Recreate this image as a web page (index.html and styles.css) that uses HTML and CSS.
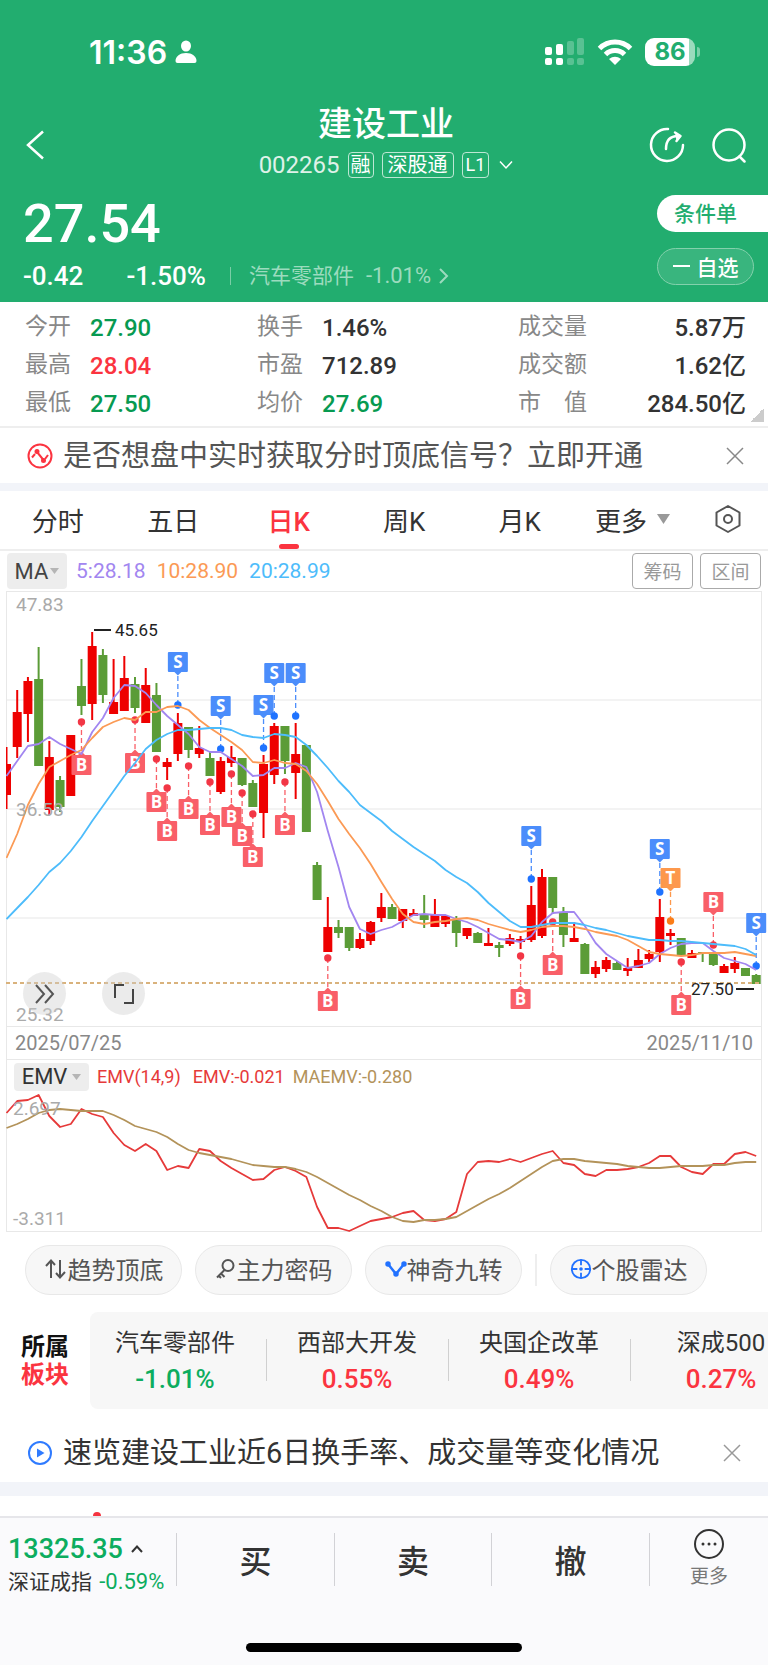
FILE: index.html
```
<!DOCTYPE html>
<html lang="zh-Hans">
<head>
    <meta charset="UTF-8">
    <meta name="viewport" content="width=device-width, initial-scale=1.0">
    <title>建设工业 002265</title>
    <link rel="stylesheet" href="styles.css">
</head>
<body>

    <header class="top">
        <div class="status">
            <div class="status-time">11:36
                <svg width="22" height="24" viewBox="0 0 22 24" fill="#fff"><ellipse cx="11" cy="6" rx="5" ry="5.5"/><path d="M0.500 21C0.500 16.500 5 13 11 13s10.500 3.500 10.500 8q0 2-2 2h-17q-2 0-2-2z"/></svg>
            </div>
            <div class="status-icons">
                <svg width="40" height="28" viewBox="0 0 40 28" fill="#fff">
                    <rect x="0" y="9" width="7" height="8" rx="2"/><rect x="11" y="6" width="7" height="11" rx="2"/>
                    <rect x="22" y="3" width="7" height="14" rx="2" opacity=".25"/><rect x="32" y="0" width="7" height="17" rx="2" opacity=".25"/>
                    <rect x="0" y="20" width="7" height="7" rx="2"/><rect x="11" y="20" width="7" height="7" rx="2"/>
                    <rect x="22" y="20" width="7" height="7" rx="2" opacity=".25"/><rect x="32" y="20" width="7" height="7" rx="2" opacity=".25"/>
                </svg>
                <svg width="36" height="26" viewBox="0 0 36 26" fill="none" stroke="#fff" stroke-width="5">
                    <path d="M2.500 9.500a22 22 0 0 1 31 0"/><path d="M8.500 15.500a13.500 13.500 0 0 1 19 0"/><path d="M12 20q6-4.500 12 0l-6 6z" fill="#fff" stroke="none"/>
                </svg>
                <div class="battery">86</div>
            </div>
        </div>

        <div class="nav">
            <button class="icon-btn" aria-label="返回"><svg width="20" height="30" viewBox="0 0 20 30" fill="none" stroke="#fff" stroke-width="2.500"><path d="M18 1.500L3 15l15 13.500"/></svg></button>
            <div class="nav-title">
                <h1>建设工业</h1>
                <div class="nav-sub">
                    <span class="code">002265</span>
                    <span class="tag">融</span>
                    <span class="tag tag-wide">深股通</span>
                    <span class="tag tag-l1">L1</span>
                    <svg width="14" height="10" viewBox="0 0 14 10" fill="none" stroke="#fff" stroke-width="1.500"><path d="M1 1.500l6 6.500 6-6.500"/></svg>
                </div>
            </div>
            <div class="nav-actions">
                <button class="icon-btn" aria-label="分享"><svg width="36" height="36" viewBox="0 0 36 36" fill="none" stroke="#fff" stroke-width="2.500" stroke-linecap="round" stroke-linejoin="round"><path d="M19 2A16 16 0 1 0 34 18"/><path d="M17 22c0-9 4-13 12-13"/><path d="M26 5.500l5.500 3.500-4 5" fill="#fff"/></svg></button>
                <button class="icon-btn" aria-label="搜索"><svg width="36" height="36" viewBox="0 0 36 36" fill="none" stroke="#fff" stroke-width="2.500" stroke-linecap="round"><circle cx="18" cy="18" r="15.500"/><path d="M28.500 29.500l5 5"/></svg></button>
            </div>
        </div>

        <div class="quote">
            <div>
                <div class="price">27.54</div>
                <div class="change">
                    <span class="change-num">-0.42</span>
                    <span class="change-pct">-1.50%</span>
                    <a class="industry" href="#">汽车零部件 <span class="industry-pct">-1.01%</span>
                        <svg width="10" height="16" viewBox="0 0 10 16" fill="none" stroke="currentColor" stroke-width="2"><path d="M1 1l7 7-7 7"/></svg>
                    </a>
                </div>
            </div>
            <div class="quote-actions">
                <button class="btn-order">条件单</button>
                <button class="btn-fav"><svg width="17" height="2"><rect width="17" height="2" fill="#fff"/></svg>自选</button>
            </div>
        </div>
    </header>

    <section class="stats">
        <dl><dt>今开</dt><dd class="green">27.90</dd><dt>最高</dt><dd class="red">28.04</dd><dt>最低</dt><dd class="green">27.50</dd></dl>
        <dl><dt>换手</dt><dd>1.46%</dd><dt>市盈</dt><dd>712.89</dd><dt>均价</dt><dd class="green">27.69</dd></dl>
        <dl class="stats-right"><dt>成交量</dt><dd>5.87万</dd><dt>成交额</dt><dd>1.62亿</dd><dt>市　值</dt><dd>284.50亿</dd></dl>
    </section>

    <div class="banner">
        <svg width="26" height="26" viewBox="0 0 26 26" fill="none" stroke="#fb3440" stroke-width="2"><circle cx="13" cy="13" r="11.500"/><path d="M5 14.500l3-3.500"/><path d="M10 9l6.500 8"/><path d="M18 16l3-4"/><circle cx="10" cy="8.500" r="1.500" fill="#fb3440"/><circle cx="16.500" cy="17.500" r="1.500" fill="#fb3440"/></svg>
        <a href="#">是否想盘中实时获取分时顶底信号？立即开通</a>
        <button class="close" aria-label="关闭"><svg width="18" height="18" viewBox="0 0 18 18" stroke="#888" stroke-width="1.500"><path d="M1 1l16 16M17 1L1 17"/></svg></button>
    </div>

    <nav class="tabs">
        <button>分时</button>
        <button>五日</button>
        <button class="active">日K</button>
        <button>周K</button>
        <button>月K</button>
        <button class="tab-more">更多 <svg width="13" height="10"><path d="M0 0h13l-6.500 10z" fill="#999"/></svg></button>
        <button class="tab-set" aria-label="设置"><svg width="28" height="30" viewBox="0 0 28 30" fill="none" stroke="#555" stroke-width="2"><path d="M14 2l11.500 6.500v13L14 28 2.500 21.500v-13z" stroke-linejoin="round"/><circle cx="14" cy="15" r="4"/></svg></button>
    </nav>

    <div class="ma">
        <button class="indicator">MA<svg width="9" height="6"><path d="M0 0h9L4.500 6z" fill="#b5b5b5"/></svg></button>
        <span class="ma5">5:28.18</span>
        <span class="ma10">10:28.90</span>
        <span class="ma20">20:28.99</span>
        <button class="outline first">筹码</button>
        <button class="outline">区间</button>
    </div>

    <div class="panel">
        <svg class="chart" id="kline" viewBox="7 593 754 434"></svg>
        <div class="chart-tools">
            <button aria-label="快进"><svg width="22" height="20" viewBox="0 0 22 20" fill="none" stroke="#555" stroke-width="2"><path d="M2 1l8 9-8 9M11 1l8 9-8 9"/></svg></button>
            <button aria-label="全屏"><svg width="22" height="20" viewBox="0 0 22 20" fill="none" stroke="#444" stroke-width="2"><path d="M2 14V1h9M20 5v14h-9"/></svg></button>
        </div>
    </div>
    <div class="dates"><span>2025/07/25</span><span>2025/11/10</span></div>
    <div class="panel emv-panel">
        <div class="emv-head">
            <button class="indicator">EMV<svg width="9" height="6"><path d="M0 0h9L4.500 6z" fill="#b5b5b5"/></svg></button>
            <span class="emv">EMV(14,9)</span>
            <span class="emv">EMV:-0.021</span>
            <span class="maemv">MAEMV:-0.280</span>
        </div>
        <svg class="chart" id="emv" viewBox="7 1093 754 138"></svg>
    </div>

    <div class="tools">
        <button><svg width="24" height="22" viewBox="0 0 24 22" fill="none" stroke="#555" stroke-width="2"><path d="M7 20V3M2 8l5-5.500L11 7"/><path d="M16 2v17M12 15l4 4.500 5-5.500"/></svg>趋势顶底</button>
        <button><svg width="22" height="22" viewBox="0 0 22 22" fill="none" stroke="#555" stroke-width="2"><circle cx="13" cy="7.500" r="5.500"/><path d="M9.500 12L2 19.500M6 15.500l3.500 3.500M3.500 17.500l2.500 2.500"/></svg>主力密码</button>
        <button><svg width="22" height="18" viewBox="0 0 22 18" fill="#2272ff" stroke="#2272ff" stroke-width="2.500"><path d="M3 4l8 10 8-10" fill="none"/><circle cx="3" cy="4" r="1.500"/><circle cx="11" cy="14" r="1.500"/><circle cx="19" cy="4" r="1.500"/></svg>神奇九转</button>
        <span class="tools-line"></span>
        <button><svg width="22" height="22" viewBox="0 0 24 24" fill="none" stroke="#2272ff" stroke-width="2"><circle cx="12" cy="12" r="10"/><path d="M12 2v6M12 16v6M2 12h6M16 12h6"/><circle cx="12" cy="12" r="1" fill="#2272ff"/></svg>个股雷达</button>
    </div>

    <section class="sector">
        <h2>所属<br><span>板块</span></h2>
        <div class="sector-list">
            <a href="#">汽车零部件<b class="green2">-1.01%</b></a>
            <a href="#">西部大开发<b>0.55%</b></a>
            <a href="#">央国企改革<b>0.49%</b></a>
            <a href="#">深成500<b>0.27%</b></a>
        </div>
    </section>

    <div class="banner banner-video">
        <svg width="26" height="26" viewBox="0 0 26 26" fill="none" stroke="#2f7bff" stroke-width="2"><circle cx="13" cy="13" r="11"/><path d="M10 8.500v9l7.500-4.500z" fill="#2f7bff" stroke="none"/></svg>
        <a href="#">速览建设工业近6日换手率、成交量等变化情况</a>
        <button class="close" aria-label="关闭"><svg width="18" height="18" viewBox="0 0 18 18" stroke="#999" stroke-width="1.500"><path d="M1 1l16 16M17 1L1 17"/></svg></button>
    </div>

    <div class="peek"><svg width="8" height="4"><circle cx="4" cy="4" r="4" fill="#f5333f"/></svg></div>

    <footer class="bottom">
        <div class="trade">
            <div class="index">
                <div class="index-num">13325.35 <svg width="12" height="8" viewBox="0 0 12 8" fill="none" stroke="#333" stroke-width="2"><path d="M1 7l5-5.500L11 7"/></svg></div>
                <div class="index-name">深证成指 <span>-0.59%</span></div>
            </div>
            <button>买</button>
            <button>卖</button>
            <button>撤</button>
            <button class="trade-more">
                <svg width="32" height="32" viewBox="0 0 32 32" fill="none" stroke="#333" stroke-width="2"><circle cx="16" cy="16" r="14"/><g fill="#333" stroke="none"><circle cx="10" cy="16" r="1.500"/><circle cx="16" cy="16" r="1.500"/><circle cx="22" cy="16" r="1.500"/></g></svg>
                更多
            </button>
        </div>
        <div class="home-bar"></div>
    </footer>

    <script>
        const STEP = 10.71;
        const RED = '#ee0000';
        const GREEN = '#5b9c37';

        // [最高, 实体上沿, 实体下沿, 最低, 1 涨 / 0 跌]
        const candles = [
            [748,765,796,810,1],[691,713,748,759,1],[678,682,715,743,1],[648,680,767,767,0],[742,758,811,816,1],
            [777,781,808,813,0],[736,736,797,797,1],[660,687,707,716,0],[633,647,705,721,1],[650,656,696,704,0],
            [660,703,715,715,1],[657,679,712,712,1],[678,685,709,714,0],[669,686,724,724,1],[684,696,753,753,0],
            [759,763,768,781,1],[714,724,755,762,1],[728,728,751,759,0],[727,749,755,759,1],[753,759,777,777,0],
            [758,762,793,795,1],[747,758,764,768,1],[759,759,786,787,0],[781,784,808,808,0],[756,765,814,839,1],
            [724,727,776,785,1],[727,727,762,775,0],[724,755,774,800,1],[746,746,833,833,0],[863,866,901,901,0],
            [898,928,953,953,1],[921,928,934,939,0],[928,928,949,952,0],[934,940,949,950,1],[922,923,942,946,1],
            [894,908,919,923,1],[905,908,920,920,0],[910,910,922,929,1],[910,914,917,917,1],[896,915,921,929,0],
            [900,915,928,928,1],[917,917,925,928,1],[917,921,934,948,0],[929,929,937,940,1],[933,934,944,944,0],
            [929,944,947,947,1],[943,946,949,958,0],[935,939,945,947,1],[937,940,943,950,1],[887,906,941,943,1],
            [870,878,937,939,1],[878,878,909,915,0],[908,914,936,948,0],[923,939,943,943,1],[944,945,975,975,0],
            [962,968,975,979,1],[958,961,970,973,1],[962,964,971,971,0],[959,969,972,977,1],[950,961,969,969,1],
            [951,955,960,963,1],[900,918,953,963,1],[930,934,937,946,1],[939,939,956,956,0],[951,954,959,959,1],
            [953,953,954,963,0],[954,954,966,967,0],[965,967,974,974,1],[958,964,970,974,1],[969,969,977,977,0],
            [975,976,985,985,0]
        ];
        const ma5 = [777,762,747,745,738,745,750,755,733,719,699,686,687,694,706,717,726,735,748,753,753,760,767,777,776,769,769,764,768,793,832,868,908,930,935,931,928,922,916,915,916,916,920,923,928,934,940,941,943,937,923,914,913,913,927,944,955,962,969,967,964,955,949,945,944,944,952,959,962,965,971];
        const ma10 = [859,835,806,785,768,762,756,751,739,728,723,719,721,713,713,708,707,711,721,729,736,743,751,763,764,761,764,765,772,785,802,820,835,849,865,883,900,915,923,925,923,922,920,919,921,925,928,931,933,931,928,927,927,928,930,933,935,937,941,947,953,955,956,957,956,954,954,954,953,955,957];
        const ma20 = [920,909,898,886,873,864,852,838,822,807,792,777,764,750,741,735,731,731,730,729,729,731,736,738,739,735,736,738,746,757,769,782,793,806,814,822,832,840,848,855,862,871,878,884,893,904,913,922,928,928,926,924,924,924,926,929,931,934,937,939,941,941,942,942,943,944,945,946,947,950,956];
        const emv = [1113,1101,1100,1095,1116,1127,1124,1109,1114,1117,1133,1145,1151,1144,1151,1170,1166,1168,1149,1151,1161,1168,1174,1180,1179,1170,1167,1171,1177,1207,1228,1228,1231,1226,1221,1219,1217,1213,1211,1220,1221,1219,1212,1174,1162,1161,1162,1159,1162,1158,1154,1151,1163,1165,1174,1176,1170,1170,1169,1167,1163,1156,1156,1167,1172,1174,1164,1164,1154,1152,1156];
        const maemv = [1128,1124,1119,1113,1110,1109,1110,1111,1111,1111,1115,1120,1126,1129,1132,1137,1144,1150,1153,1155,1157,1159,1162,1165,1166,1167,1167,1169,1172,1177,1183,1189,1195,1200,1206,1211,1217,1221,1222,1220,1220,1219,1217,1211,1205,1199,1194,1188,1181,1174,1167,1161,1159,1159,1161,1162,1163,1164,1166,1167,1168,1168,1167,1166,1166,1166,1165,1165,1163,1162,1162];

        // [序号, 圆点 y, 字母, 方向 -1 上 / 1 下]
        const marks = [
            [16,706,'S',-1],[20,750,'S',-1],[24,749,'S',-1],[25,717,'S',-1],[27,717,'S',-1],[49,880,'S',-1],
            [61,893,'S',-1],[62,922,'T',-1],[66,946,'B',-1],[70,967,'S',-1],
            [7,723,'B',1],[12,721,'B',1],[14,760,'B',1],[15,789,'B',1],[17,767,'B',1],[19,783,'B',1],[21,775,'B',1],
            [22,794,'B',1],[23,815,'B',1],[26,783,'B',1],[30,959,'B',1],[48,957,'B',1],[51,923,'B',1],[63,963,'B',1]
        ];
        const markColors = {
            S: ['#4b8dfb', '#1f73ff'],
            T: ['#fd984c', '#fb7d18'],
            B: ['#f95f68', '#f23645']
        };

        function px(i) {
            return 6.5 + i * STEP;
        }

        function line(data, color, width) {
            const points = data.map((y, i) => `${px(i).toFixed(1)},${y}`).join(' ');
            return `<polyline points="${points}" fill="none" stroke="${color}" stroke-width="${width}" stroke-linejoin="round"/>`;
        }

        function drawCandle(c, i) {
            const color = c[4] ? RED : GREEN;
            const x = px(i);
            return `<path d="M${x} ${c[0]}V${c[3]}" stroke="${color}" stroke-width="2"/>` +
                `<rect x="${x - 4.5}" y="${c[1]}" width="9" height="${c[2] - c[1]}" fill="${color}"/>`;
        }

        function drawMark(m) {
            const [i, y, letter, dir] = m;
            const [fill, dot] = markColors[letter];
            const x = px(i);
            const c = y + dir * 43;
            const edge = c - dir * 9.5;
            return `<path d="M${x} ${y}V${edge}" stroke="${fill}" stroke-width="1.3" stroke-dasharray="5 3"/>` +
                `<circle cx="${x}" cy="${y}" r="3.7" fill="${dot}"/>` +
                `<rect x="${x - 10}" y="${c - 10}" width="20" height="20" rx="1" fill="${fill}"/>` +
                `<path d="M${x - 4} ${edge}h8l-4 ${-dir * 4}z" fill="${fill}"/>` +
                `<text class="mark" x="${x}" y="${c + 6}">${letter}</text>`;
        }

        function drawKline() {
            let html = '<path d="M7 701H761M7 810H761M7 919H761" stroke="#efefef" stroke-width="1.5"/>';
            html += '<clipPath id="frame"><rect x="6" y="593" width="762" height="434"/></clipPath><g clip-path="url(#frame)">';
            html += candles.map(drawCandle).join('');
            html += marks.map(drawMark).join('');
            html += line(ma5, '#a286f0', 1.8) + line(ma10, '#fb9a55', 1.8) + line(ma20, '#4dbcfb', 1.8);
            html += '<path d="M6 984H762" stroke="#d9b27c" stroke-width="2" stroke-dasharray="4 3"/></g>';
            html += '<path d="M94 631H111M736 990H754" stroke="#222" stroke-width="2"/>';
            html += '<text class="peak" x="115" y="637">45.65</text><text class="peak" x="691" y="996">27.50</text>';
            html += '<text class="axis" x="16" y="612">47.83</text><text class="axis" x="16" y="817">36.58</text><text class="axis" x="16" y="1022">25.32</text>';
            document.getElementById('kline').innerHTML = html;
        }

        function drawEmv() {
            document.getElementById('emv').innerHTML =
                line(emv, '#e63a3a', 1.8) + line(maemv, '#b3935a', 1.8) +
                '<text class="axis" x="13" y="1115">2.697</text><text class="axis" x="13" y="1225">-3.311</text>';
        }

        drawKline();
        drawEmv();
    </script>

</body>
</html>
```

FILE: styles.css
```
* {
    box-sizing: border-box;
}
body {
    margin: 0;
    background: #fff;
    color: #333;
    font-family: Roboto, "Noto Sans CJK SC", sans-serif;
    font-size: 24px;
}
button {
    margin: 0;
    padding: 0;
    border: none;
    background: none;
    color: inherit;
    font-family: inherit;
    font-size: inherit;
    cursor: pointer;
}
a {
    color: inherit;
    text-decoration: none;
}
h1, h2, dl, dd {
    margin: 0;
}
svg {
    flex-shrink: 0;
}

/* 顶部 */
.top {
    background: #22ad6f;
    color: #fff;
}
.status {
    display: flex;
    justify-content: space-between;
    align-items: center;
    height: 102px;
    padding: 2px 73px 0 89px;
}
.status-time {
    display: flex;
    align-items: center;
    gap: 8px;
    font-family: Inter, sans-serif;
    font-size: 32px;
    font-weight: 600;
}
.status-icons {
    display: flex;
    align-items: center;
    gap: 12px;
}
.battery {
    position: relative;
    width: 50px;
    height: 28px;
    border-radius: 9px;
    background: linear-gradient(to right, #fff 88%, #9bdbbd 88%);
    color: #22ad6f;
    font-family: Inter, sans-serif;
    font-size: 24px;
    font-weight: 700;
    line-height: 28px;
    text-align: center;
}
.battery::after {
    content: "";
    position: absolute;
    left: 52px;
    top: 9px;
    width: 3px;
    height: 10px;
    border-radius: 0 3px 3px 0;
    background: #7acfa8;
}
.nav {
    display: grid;
    grid-template-columns: 1fr auto 1fr;
    align-items: center;
    min-height: 86px;
    padding: 0 21px 0 25px;
}
.icon-btn {
    display: flex;
}
.nav-title {
    align-self: start;
}
.nav-title h1 {
    font-size: 34px;
    font-weight: 500;
    line-height: 44px;
    text-align: center;
}
.nav-sub {
    display: flex;
    align-items: center;
    gap: 8px;
    margin-top: 5px;
}
.code {
    font-size: 24px;
    opacity: .85;
}
.tag {
    height: 26px;
    padding: 0 2px;
    border: 1px solid rgba(255, 255, 255, .7);
    border-radius: 4px;
    font-size: 20px;
    line-height: 24px;
}
.tag-wide {
    padding: 0 5px;
}
.tag-l1 {
    padding: 0 3px;
    margin-right: 2px;
    font-size: 18px;
}
.nav-actions {
    display: flex;
    justify-content: flex-end;
    gap: 26px;
}
.quote {
    display: flex;
    justify-content: space-between;
    padding: 7px 0 10px 23px;
}
.price {
    font-size: 54px;
    font-weight: 500;
    line-height: 58px;
}
.change {
    display: flex;
    align-items: center;
    height: 32px;
    margin-top: 7px;
    font-size: 26px;
    font-weight: 500;
}
.change-pct {
    margin-left: 43px;
}
.industry {
    display: flex;
    align-items: center;
    gap: 12px;
    margin-left: 24px;
    font-size: 21px;
    font-weight: 400;
    line-height: 22px;
    color: #9cdbbe;
}
.industry-pct {
    font-size: 22px;
}
.industry::before {
    content: "";
    width: 1px;
    height: 18px;
    margin-right: 6px;
    background: #7acea6;
}
.industry svg {
    margin-left: -4px;
}
.quote-actions {
    display: flex;
    flex-direction: column;
    gap: 16px;
    width: 111px;
}
.btn-order {
    height: 37px;
    padding: 0 14px 3px 0;
    border-radius: 19px 0 0 19px;
    background: #fff;
    color: #22ad6f;
    font-size: 21px;
    font-weight: 500;
}
.btn-fav {
    display: flex;
    justify-content: center;
    align-items: center;
    gap: 7px;
    width: 97px;
    height: 37px;
    padding-bottom: 2px;
    border: 1px solid #83d1ac;
    border-radius: 19px;
    background: #39b57e;
    color: #fff;
    font-size: 21px;
    font-weight: 500;
}

/* 行情数据 */
.stats {
    display: grid;
    grid-template-columns: 232fr 261fr 228fr;
    padding: 8px 22px 2px 25px;
    border-bottom: 2px solid #eee;
    background: linear-gradient(135deg, transparent 50%, #ccc 50%) right 4px bottom 4px / 14px 14px no-repeat;
}
.stats dl {
    display: grid;
    grid-template-columns: 65px 1fr;
    grid-auto-rows: 38px;
    line-height: 36px;
}
.stats dt {
    color: #888;
    font-size: 23px;
    white-space: nowrap;
    line-height: 34px;
}
.stats dd {
    font-weight: 500;
}
.stats .stats-right {
    grid-template-columns: auto 1fr;
}
.stats-right dd {
    text-align: right;
}
.green {
    color: #079a51;
}
.red {
    color: #fb3440;
}

/* 提示条 */
.banner {
    display: flex;
    align-items: center;
    gap: 10px;
    min-height: 63px;
    padding: 0 22px 0 27px;
    border-bottom: 8px solid #f2f4f9;
    font-size: 29px;
    line-height: 40px;
    color: #555;
    white-space: nowrap;
}
.close {
    display: flex;
    margin-left: auto;
    padding: 2px;
}
.banner-video {
    min-height: 87px;
    padding-top: 15px;
    padding-right: 25px;
    border-bottom-width: 14px;
    color: #333;
}

/* 周期 */
.tabs {
    display: flex;
    height: 60px;
    border-bottom: 2px solid #eee;
    font-size: 26px;
    color: #333;
}
.tabs button {
    position: relative;
    flex: 115;
    padding-bottom: 2px;
}
.tabs .active {
    color: #fb3440;
    font-weight: 500;
}
.active::after {
    content: "";
    position: absolute;
    left: calc(50% - 10px);
    bottom: 0;
    width: 20px;
    height: 5px;
    border-radius: 3px;
    background: #fb3440;
}
.tabs .tab-more {
    display: flex;
    justify-content: center;
    align-items: center;
    gap: 10px;
    flex: 110;
}
.tabs .tab-set {
    display: flex;
    justify-content: center;
    align-items: center;
    flex: 80;
}
.ma {
    display: flex;
    align-items: center;
    gap: 11px;
    height: 40px;
    padding: 0 7px;
    font-size: 21px;
}
.indicator {
    display: flex;
    justify-content: center;
    align-items: center;
    gap: 2px;
    width: 60px;
    height: 36px;
    border-radius: 4px;
    background: #ededed;
    color: #444;
    font-size: 22px;
}
.ma .indicator {
    margin-right: -2px;
}
.ma5 {
    color: #a286f0;
}
.ma10 {
    color: #fb9a55;
}
.ma20 {
    color: #4dbcfb;
}
.outline {
    width: 61px;
    height: 36px;
    padding-bottom: 2px;
    border: 1px solid #aaa;
    border-radius: 4px;
    color: #999;
    font-size: 19px;
}
.outline.first {
    margin-left: auto;
    margin-right: -4px;
}

/* 图表 */
.panel {
    position: relative;
    margin: 0 6px;
    border: 1px solid #e8e8e8;
}
.chart {
    display: block;
    width: 100%;
    overflow: visible;
}
.mark {
    fill: #fff;
    font: bold 17px "Open Sans", sans-serif;
    text-anchor: middle;
}
.peak {
    fill: #222;
    font-size: 17px;
}
.axis {
    fill: #aaa;
    font-size: 19px;
}
.chart-tools {
    position: absolute;
    left: 16px;
    bottom: 11px;
    display: flex;
    gap: 36px;
}
.chart-tools button {
    display: flex;
    justify-content: center;
    align-items: center;
    width: 43px;
    height: 43px;
    border-radius: 50%;
    background: rgba(205, 205, 205, .4);
}
.dates {
    display: flex;
    justify-content: space-between;
    margin: 0 6px;
    padding: 0 8px;
    border: solid #e8e8e8;
    border-width: 0 1px;
    font-size: 20px;
    line-height: 32px;
    color: #888;
}
.emv-head {
    display: flex;
    align-items: center;
    gap: 8px;
    height: 33px;
    padding-left: 7px;
    font-size: 18px;
}
.emv-head .indicator {
    gap: 5px;
    width: 75px;
    height: 28px;
    color: #333;
}
.emv {
    margin-right: 4px;
    color: #e63a3a;
}
.maemv {
    margin-left: -4px;
    color: #b3935a;
}

/* 工具 */
.tools {
    display: flex;
    align-items: center;
    gap: 13px;
    padding: 13px 0 17px 25px;
}
.tools button {
    display: flex;
    justify-content: center;
    align-items: center;
    width: 157px;
    height: 50px;
    padding-bottom: 3px;
    border: 1px solid #e8e8e8;
    border-radius: 25px;
    background: #f7f7f7;
    color: #555;
    white-space: nowrap;
}
.tools-line {
    width: 2px;
    height: 32px;
    background: #eee;
}
.sector {
    display: flex;
    align-items: center;
    gap: 21px;
    padding-left: 21px;
    overflow: hidden;
}
.sector h2 {
    flex-shrink: 0;
    color: #111;
    font-size: 24px;
    font-weight: 700;
    line-height: 28px;
}
.sector h2 span {
    color: #fb3440;
}
.sector-list {
    display: grid;
    grid-template-columns: repeat(4, 1fr);
    flex: 1;
    min-width: 0;
    padding: 13px 0 12px;
    margin-right: -50px;
    border-radius: 8px;
    background: #f7f7f7;
}
.sector-list a {
    position: relative;
    padding-right: 12px;
    line-height: 36px;
    text-align: center;
}
.sector-list a + a::before {
    content: "";
    position: absolute;
    left: -6px;
    top: 14px;
    width: 1px;
    height: 42px;
    background: #d0d0d0;
}
.sector-list b {
    display: block;
    color: #fb3440;
    font-size: 26px;
    font-weight: 500;
}
.sector-list .green2 {
    color: #0cad5f;
}
.peek {
    display: flex;
    align-items: flex-end;
    height: 20px;
    padding-left: 93px;
}

/* 底部交易栏 */
.bottom {
    padding-bottom: 15px;
    border-top: 2px solid #e6e6ea;
    background: #fafafc;
}
.trade {
    display: grid;
    grid-template-columns: 176fr 158fr 157fr 158fr 119fr;
    align-items: center;
    padding: 13px 0 46px;
}
.trade button {
    height: 53px;
    margin-top: -10px;
    border-left: 1px solid #d2d2d6;
    font-size: 32px;
    font-weight: 500;
}
.index {
    padding-left: 8px;
    white-space: nowrap;
}
.index-num {
    display: flex;
    align-items: center;
    gap: 8px;
    color: #0cad5f;
    font-size: 27px;
    font-weight: 500;
    line-height: 36px;
}
.index-name {
    font-size: 21px;
    line-height: 30px;
}
.index-name span {
    margin-left: 2px;
    color: #0cad5f;
    font-size: 22px;
}
.trade .trade-more {
    display: flex;
    flex-direction: column;
    justify-content: center;
    align-items: center;
    gap: 4px;
    color: #777;
    font-size: 19px;
    font-weight: 400;
    line-height: 26px;
}
.home-bar {
    width: 36%;
    height: 9px;
    margin: 0 auto;
    border-radius: 5px;
    background: #000;
}
```
